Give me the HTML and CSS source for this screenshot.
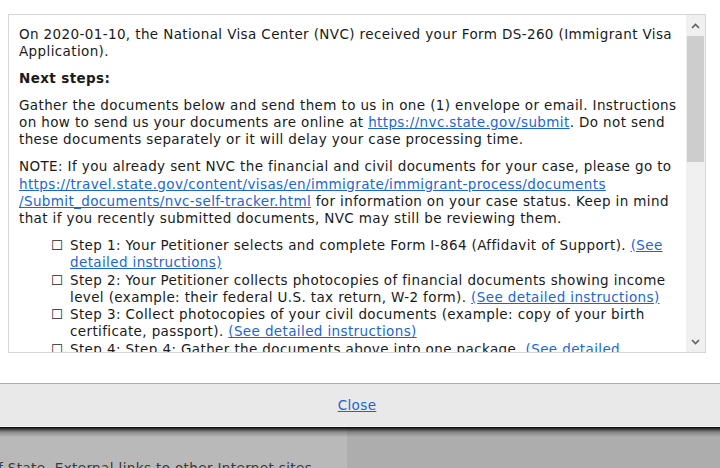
FILE: index.html
```html
<!DOCTYPE html>
<html lang="en">
<head>
    <meta charset="UTF-8">
    <meta name="viewport" content="width=device-width, initial-scale=1.0">
    <title>Case Status</title>
    <link rel="stylesheet" href="styles.css">
</head>
<body>
    <div class="dialog">
        <div class="dialog-body">
            <div class="scroll-box">
                <div class="scroll-content">
                    <p>On 2020-01-10, the National Visa Center (NVC) received your Form DS-260 (Immigrant Visa Application).</p>
                    <p><strong>Next steps:</strong></p>
                    <p>Gather the documents below and send them to us in one (1) envelope or email. Instructions on how to send us your documents are online at <a href="#">https://nvc.state.gov/submit</a>. Do not send these documents separately or it will delay your case processing time.</p>
                    <p>NOTE: If you already sent NVC the financial and civil documents for your case, please go to <a href="#">https://travel.state.gov/content/visas/en/immigrate/immigrant-process/documents<br>/Submit_documents/nvc-self-tracker.html</a> for information on your case status. Keep in mind that if you recently submitted documents, NVC may still be reviewing them.</p>
                    <ul class="steps">
                        <li><span class="box">&#9744;</span><span>Step 1: Your Petitioner selects and complete Form I-864 (Affidavit of Support). <a href="#">(See detailed instructions)</a></span></li>
                        <li><span class="box">&#9744;</span><span>Step 2: Your Petitioner collects photocopies of financial documents showing income level (example: their federal U.S. tax return, W-2 form). <a href="#">(See detailed instructions)</a></span></li>
                        <li><span class="box">&#9744;</span><span>Step 3: Collect photocopies of your civil documents (example: copy of your birth certificate, passport). <a href="#">(See detailed instructions)</a></span></li>
                        <li><span class="box">&#9744;</span><span>Step 4: Step 4: Gather the documents above into one package. <a href="#">(See detailed instructions)</a></span></li>
                    </ul>
                </div>
                <!-- fake scrollbar, drawn so it looks like the classic windows one -->
                <div class="scrollbar">
                    <div class="scroll-btn">
                        <svg width="9" height="6" viewBox="0 0 9 6"><path d="M1 5 L4.5 1.5 L8 5" fill="none" stroke="#606060" stroke-width="1.6"/></svg>
                    </div>
                    <div class="scroll-thumb"></div>
                    <div class="scroll-track"></div>
                    <div class="scroll-btn">
                        <svg width="9" height="6" viewBox="0 0 9 6"><path d="M1 1 L4.5 4.5 L8 1" fill="none" stroke="#606060" stroke-width="1.6"/></svg>
                    </div>
                </div>
            </div>
        </div>
        <div class="dialog-footer">
            <a href="#">Close</a>
        </div>
    </div>
    <div class="backdrop">
        <div class="backdrop-left">
            <p>f State. External links to other Internet sites</p>
        </div>
        <div class="backdrop-right"></div>
    </div>
</body>
</html>
```

FILE: styles.css
```css
body {
    margin: 0;
    font-family: "DejaVu Sans", Verdana, sans-serif;
    font-size: 13.5px;
    letter-spacing: 0.38px;
    color: #1a1a1a;
    background: #fff;
    overflow: hidden;
}
a {
    color: #1a66d6;
}
.dialog {
    background: #fff;
}
.dialog-body {
    height: 383px;
    padding: 14px 14px 0 8px;
    box-sizing: border-box;
}
.scroll-box {
    display: flex;
    height: 339px;
    border: 1px solid #d6d6d6;
    box-sizing: border-box;
}
.scroll-content {
    flex: 1;
    overflow: hidden;
    padding: 11px 4px 0 10px;
    line-height: 17.3px;
}
.scroll-content p {
    margin: 0 0 9.5px 0;
}
.steps {
    list-style: none;
    margin: 0;
    padding-left: 32px;
}
.steps li {
    display: flex;
}
.steps .box {
    flex: none;
    width: 19px;
    letter-spacing: 0;
}
.scrollbar {
    width: 19px;
    display: flex;
    flex-direction: column;
    background: #f0f0f0;
}
.scroll-btn {
    height: 21px;
    display: flex;
    align-items: center;
    justify-content: center;
}
.scroll-thumb {
    height: 126px;
    margin: 0 1px;
    background: #cdcdcd;
}
.scroll-track {
    flex: 1;
}
.dialog-footer {
    height: 42px;
    border-top: 1px solid #acacac;
    border-bottom: 1px solid #f4f4f4;
    background: #e9e9e9;
    display: flex;
    align-items: center;
    justify-content: center;
    padding-right: 6px;
}
.backdrop {
    display: flex;
    height: 60px;
}
.backdrop-left {
    width: 347px;
    background: linear-gradient(#050505, #8a8a8a 5px, #b9b9b9 10px);
    overflow: hidden;
}
.backdrop-left p {
    margin: 33px 0 0 -2px;
    color: #3a3a3a;
    white-space: nowrap;
}
.backdrop-right {
    flex: 1;
    background: linear-gradient(#050505, #828282 5px, #adadad 10px);
}
```
